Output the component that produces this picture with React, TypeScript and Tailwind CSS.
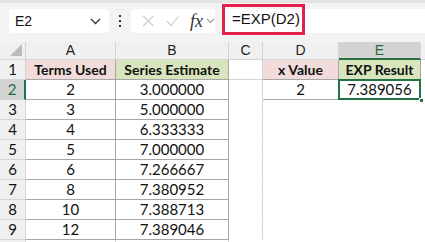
import React from "react";

const F = { fontFamily: "Lato, 'Liberation Sans', sans-serif" };

type CellProps = {
  w: string;
  children?: React.ReactNode;
  cls?: string;
};

function Cell({ w, children, cls = "" }: CellProps) {
  return (
    <div className={`${w} h-full shrink-0 flex items-center justify-center border-r border-b box-border whitespace-nowrap ${cls}`}>
      {children}
    </div>
  );
}

const cols = ["w-[90px]", "w-[113px]", "w-[34px]", "w-[76px]", "w-[82px]"];

const rows: [string, string][] = [
  ["2", "3.000000"],
  ["3", "5.000000"],
  ["4", "6.333333"],
  ["5", "7.000000"],
  ["6", "7.266667"],
  ["8", "7.380952"],
  ["10", "7.388713"],
  ["12", "7.389046"],
];

export default function App() {
  return (
    <div className="w-[425px] h-[242px] overflow-hidden bg-white text-[15px] text-[#111]" style={F}>
      {/* formula bar */}
      <div className="h-[42px] bg-[#f3f3f3] border-t-[3px] border-[#e4e4e4] flex items-start pt-[6px] relative">
        <div className="ml-[9px] w-[100px] h-[24px] bg-white rounded-[4px] flex items-center justify-between pl-[6px] pr-[8px] text-[14px]" style={{ fontFamily: "'Liberation Sans', sans-serif" }}>
          <span>E2</span>
          <svg width="11" height="7" viewBox="0 0 11 7"><path d="M1 1l4.5 4.5L10 1" fill="none" stroke="#333" strokeWidth="1.3" /></svg>
        </div>
        <div className="w-[22px] h-[24px] flex flex-col items-center justify-center gap-[3px]">
          <div className="w-[2px] h-[2px] bg-[#333]" />
          <div className="w-[2px] h-[2px] bg-[#333]" />
          <div className="w-[2px] h-[2px] bg-[#333]" />
        </div>
        <div className="w-[84px] h-[24px] bg-white rounded-[4px] flex items-center pl-[11px] gap-[11px]">
          <svg width="14" height="14" viewBox="0 0 14 14"><path d="M1 1l12 12M13 1L1 13" stroke="#c8c8c8" strokeWidth="1.2" /></svg>
          <svg width="15" height="12" viewBox="0 0 15 12"><path d="M1 6l4.5 5L14 1" fill="none" stroke="#c8c8c8" strokeWidth="1.2" /></svg>
          <div className="flex items-center gap-[3px]">
            <span className="italic text-[18px] text-[#333]" style={{ fontFamily: "'Liberation Serif', serif" }}>fx</span>
            <svg width="9" height="6" viewBox="0 0 9 6"><path d="M1 1l3.5 3.5L8 1" fill="none" stroke="#999" strokeWidth="1.1" /></svg>
          </div>
        </div>
        <div className="ml-[7px] flex-1 h-[24px] bg-white" />
        <div className="absolute left-[222px] top-[1px] w-[83px] h-[31px] border-[3px] border-[#e5204d] flex items-center pl-[7px] text-[15px] whitespace-nowrap" style={{ fontFamily: "'Liberation Sans', sans-serif" }}>
          =EXP(D2)
        </div>
      </div>

      {/* column headers */}
      <div className="h-[18px] flex bg-[#f0f0f0] text-[14px]" style={{ fontFamily: "'Liberation Sans', sans-serif" }}>
        <div className="w-[26px] h-full shrink-0 relative border-r border-b border-[#d4d4d4]">
          <div className="absolute right-[3px] bottom-[3px] w-0 h-0 border-l-[12px] border-l-transparent border-b-[12px] border-b-[#bcbcbc]" />
        </div>
        {["A", "B", "C", "D"].map((c, i) => (
          <Cell key={c} w={cols[i]} cls="border-[#d4d4d4] text-[#222]">{c}</Cell>
        ))}
        <Cell w={cols[4]} cls="bg-[#d3d3d3] text-[#1e6b3d] border-r-[#d4d4d4] border-b-2 border-b-[#217346]">E</Cell>
        <div className="flex-1 h-full border-b border-[#d4d4d4]" />
      </div>

      {/* row 1 */}
      <div className="h-[20px] flex font-bold text-[14px]">
        <Cell w="w-[26px]" cls="bg-[#f0f0f0] border-[#d4d4d4] font-normal text-[15px]">1</Cell>
        <Cell w={cols[0]} cls="bg-[#f2dcdb] border-[#a6a6a6]">Terms Used</Cell>
        <Cell w={cols[1]} cls="bg-[#d8e4bc] border-[#a6a6a6]">Series Estimate</Cell>
        <Cell w={cols[2]} cls="border-[#d4d4d4]" />
        <Cell w={cols[3]} cls="bg-[#f2dcdb] border-[#a6a6a6]">x Value</Cell>
        <Cell w={cols[4]} cls="bg-[#d8e4bc] border-[#a6a6a6]">EXP Result</Cell>
        <div className="flex-1 h-full" />
      </div>

      {rows.map(([a, b], i) => {
        const r = i + 2;
        const first = r === 2;
        return (
          <div key={r} className="h-[20px] flex">
            <Cell
              w="w-[26px]"
              cls={first ? "bg-[#d3d3d3] text-[#1e6b3d] border-[#d4d4d4] border-r-2 border-r-[#217346]" : "bg-[#f0f0f0] border-[#d4d4d4]"}
            >
              {r}
            </Cell>
            <Cell w={cols[0]} cls="border-[#a6a6a6]">{a}</Cell>
            <Cell w={cols[1]} cls="border-[#a6a6a6]">{b}</Cell>
            <Cell w={cols[2]} cls="border-transparent border-r-[#d4d4d4]" />
            {first ? (
              <>
                <Cell w={cols[3]} cls="border-[#a6a6a6]">2</Cell>
                <div className="w-[82px] h-full shrink-0 relative">
                  <div className="absolute -left-[1px] -top-[1px] w-[83px] h-[21px] border-2 border-[#217346] flex items-center justify-center bg-white">
                    7.389056
                  </div>
                  <div className="absolute -right-[3px] -bottom-[3px] w-[5px] h-[5px] bg-[#217346] border border-white" />
                </div>
              </>
            ) : (
              <>
                <div className="w-[76px] shrink-0" />
                <div className="w-[82px] shrink-0" />
              </>
            )}
            <div className="flex-1 h-full" />
          </div>
        );
      })}
      <div className="h-[20px] flex">
        <Cell w="w-[26px]" cls="bg-[#f0f0f0] border-[#d4d4d4]" />
        <div className="w-[90px] h-full border-r border-[#d4d4d4]" />
        <div className="w-[113px] h-full border-r border-[#d4d4d4]" />
      </div>
    </div>
  );
}
